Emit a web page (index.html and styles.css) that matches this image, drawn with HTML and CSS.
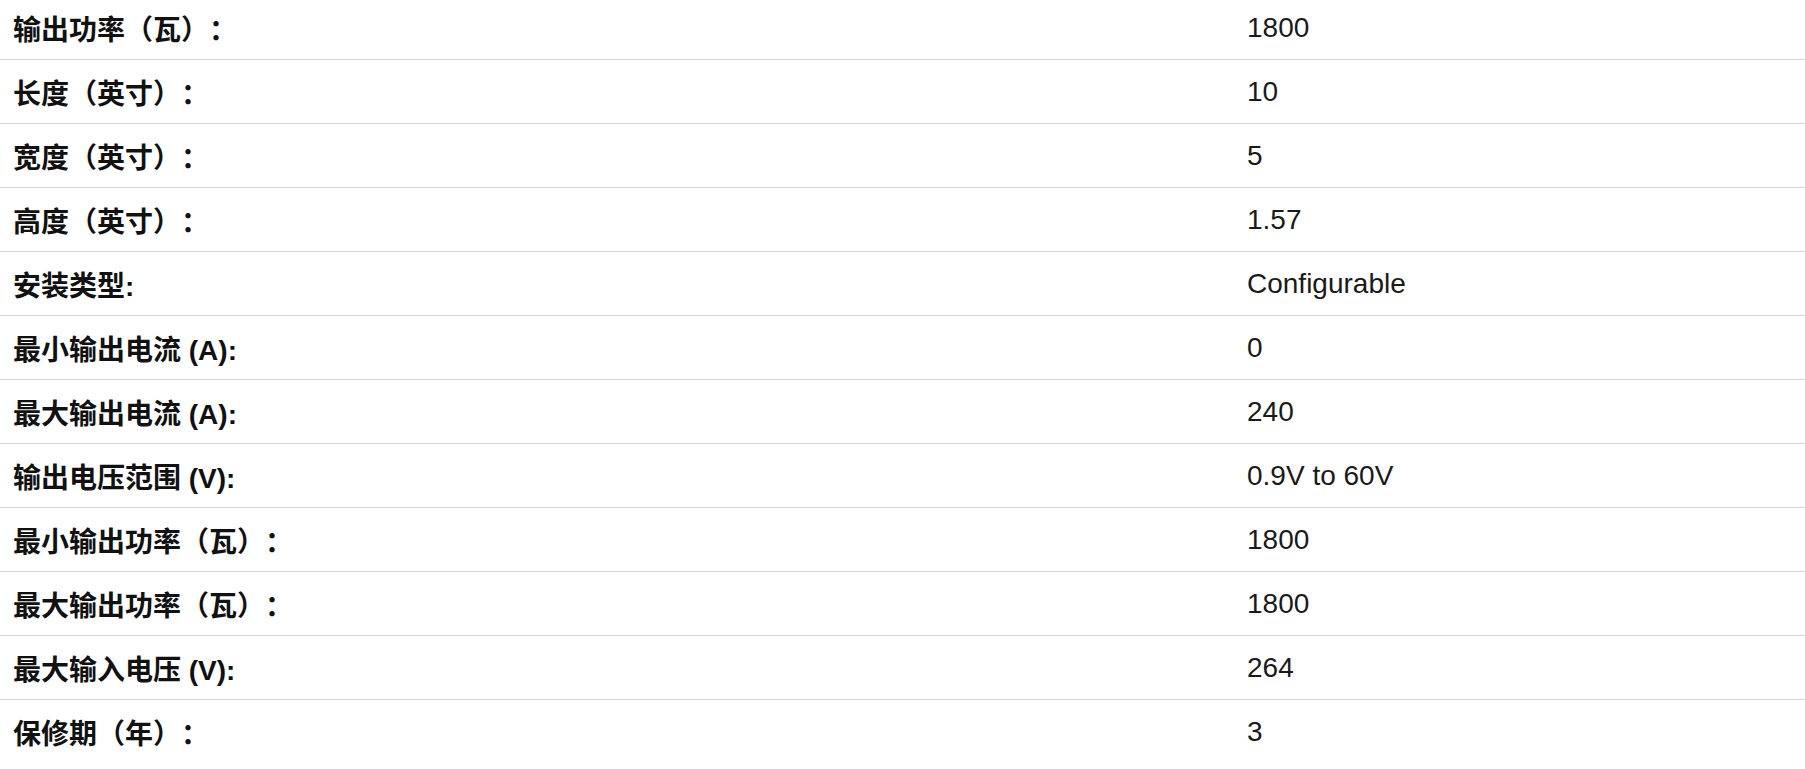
FILE: index.html
```html
<!DOCTYPE html>
<html lang="zh-CN">
<head>
<meta charset="utf-8">
<title>规格参数</title>
<link rel="stylesheet" href="styles.css">
</head>
<body>
<div class="specs">
  <div class="row"><div class="label">输出功率（瓦）：</div><div class="value">1800</div></div>
  <div class="row"><div class="label">长度（英寸）：</div><div class="value">10</div></div>
  <div class="row"><div class="label">宽度（英寸）：</div><div class="value">5</div></div>
  <div class="row"><div class="label">高度（英寸）：</div><div class="value">1.57</div></div>
  <div class="row"><div class="label">安装类型:</div><div class="value">Configurable</div></div>
  <div class="row"><div class="label">最小输出电流 (A):</div><div class="value">0</div></div>
  <div class="row"><div class="label">最大输出电流 (A):</div><div class="value">240</div></div>
  <div class="row"><div class="label">输出电压范围 (V):</div><div class="value">0.9V to 60V</div></div>
  <div class="row"><div class="label">最小输出功率（瓦）：</div><div class="value">1800</div></div>
  <div class="row"><div class="label">最大输出功率（瓦）：</div><div class="value">1800</div></div>
  <div class="row"><div class="label">最大输入电压 (V):</div><div class="value">264</div></div>
  <div class="row"><div class="label">保修期（年）：</div><div class="value">3</div></div>
</div>
</body>
</html>
```
FILE: styles.css
```css
html, body {
  margin: 0;
  padding: 0;
  background: #ffffff;
}
body {
  font-family: "Liberation Sans", "Noto Sans CJK SC", Arial, sans-serif;
  font-size: 28px;
  color: #111111;
  overflow: hidden;
  text-spacing-trim: space-all;
}
.specs {
  margin-top: -4px;
  display: flex;
  flex-direction: column;
}
.row {
  display: grid;
  grid-template-columns: 1234px 1fr;
  height: 63px;
  align-items: center;
  border-bottom: 1px solid #d3d9df;
}
.row:last-child {
  border-bottom: none;
}
.label {
  padding: 0 13px;
  font-weight: bold;
  color: #111111;
  text-spacing-trim: space-all;
}
.value {
  padding: 0 13px;
  color: #1a1a1a;
}
```
